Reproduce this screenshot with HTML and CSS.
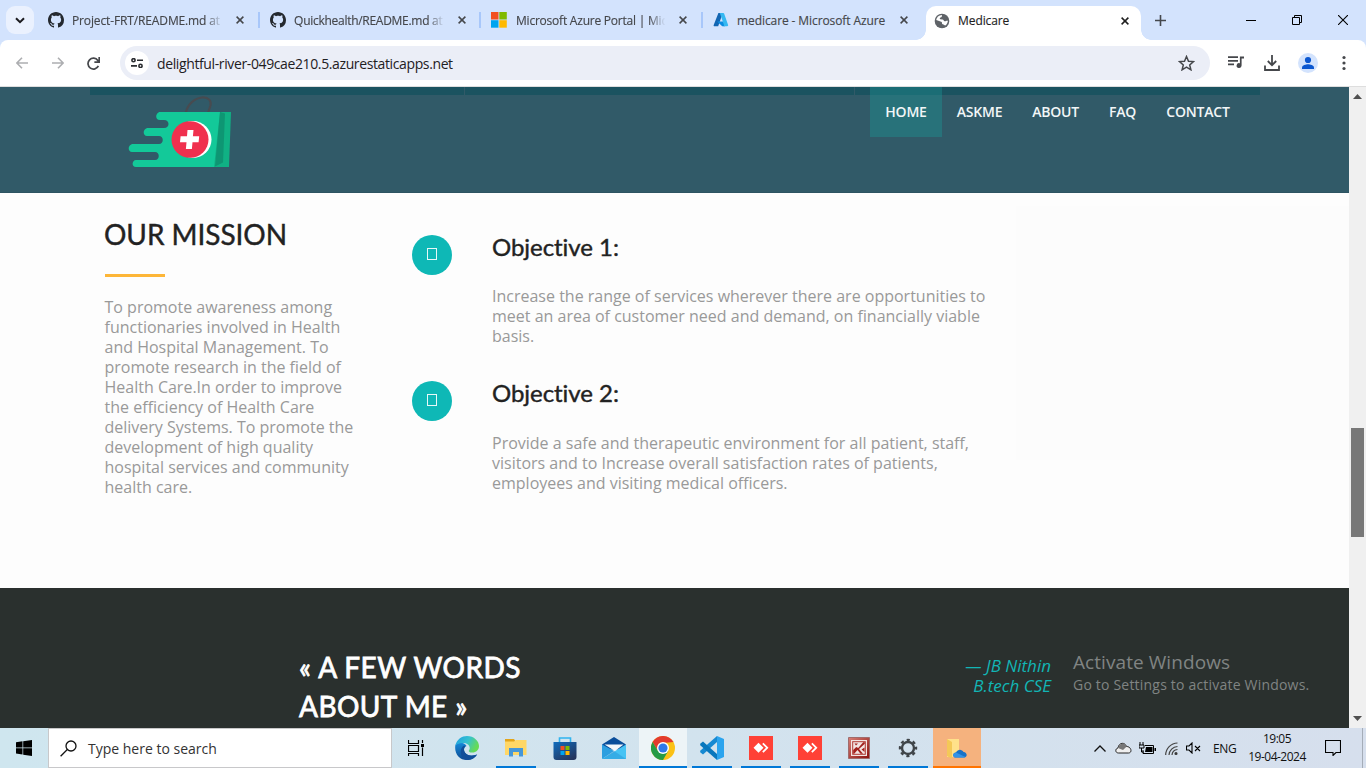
FILE: index.html
```html
<!DOCTYPE html>
<html lang="en">
<head>
<meta charset="utf-8">
<title>Medicare</title>
<link rel="stylesheet" href="styles.css">
</head>
<body>
<svg class="defs" width="0" height="0">
  <symbol id="github" viewBox="0 0 16 16"><path fill="#24292f" d="M8 0C3.58 0 0 3.58 0 8c0 3.54 2.29 6.53 5.47 7.59.4.07.55-.17.55-.38 0-.19-.01-.82-.01-1.49-2.01.37-2.53-.49-2.69-.94-.09-.23-.48-.94-.82-1.13-.28-.15-.68-.52-.01-.53.63-.01 1.08.58 1.23.82.72 1.21 1.87.87 2.33.66.07-.52.28-.87.51-1.07-1.78-.2-3.64-.89-3.64-3.95 0-.87.31-1.59.82-2.15-.08-.2-.36-1.02.08-2.12 0 0 .67-.21 2.2.82.64-.18 1.32-.27 2-.27s1.36.09 2 .27c1.53-1.04 2.2-.82 2.2-.82.44 1.1.16 1.92.08 2.12.51.56.82 1.27.82 2.15 0 3.07-1.87 3.75-3.65 3.95.29.25.54.73.54 1.48 0 1.07-.01 1.93-.01 2.2 0 .21.15.46.55.38A8.01 8.01 0 0 0 16 8c0-4.42-3.58-8-8-8z"/></symbol>
  <symbol id="close" viewBox="0 0 8 8"><path d="M.6.6l6.8 6.8M7.4.6L.6 7.4" fill="none" stroke="currentColor" stroke-width="1.5"/></symbol>
  <symbol id="anydesk" viewBox="0 0 24 24"><path fill="#ff4136" d="M0 0h24v24H0z"/><path fill="#fff" d="M9.5 6.8l5 5-5 5-5-5zM13.2 8l1.3-1.2 5 5-5 5-1.3-1.2 3.8-3.8z"/></symbol>
</svg>
<div class="window">
  <header class="tabs">
    <button class="tab-search"><svg width="10" height="7" viewBox="0 0 10 7"><path d="M1 1.2l4 4 4-4" fill="none" stroke="#1b1b1f" stroke-width="2"/></svg></button>
    <div class="tab"><svg class="fav"><use href="#github"/></svg><span class="label fade">Project-FRT/README.md at</span><svg class="x"><use href="#close"/></svg></div>
    <div class="tab"><svg class="fav"><use href="#github"/></svg><span class="label fade quick">Quickhealth/README.md at</span><svg class="x"><use href="#close"/></svg></div>
    <div class="tab"><svg class="fav" viewBox="0 0 16 16"><path fill="#f25022" d="M0 0h7.5v7.5H0z"/><path fill="#7fba00" d="M8.3 0h7.5v7.5H8.3z"/><path fill="#00a4ef" d="M0 8.2h7.5v7.5H0z"/><path fill="#ffb900" d="M8.3 8.2h7.5v7.5H8.3z"/></svg><span class="label fade ms">Microsoft Azure Portal | Mic</span><svg class="x"><use href="#close"/></svg></div>
    <div class="tab last"><svg class="fav" viewBox="0 0 16 16"><path fill="#1265b2" d="M5.4 1h4.3L5.2 14.3H1.5c-.7 0-1.1-.6-.8-1.3z"/><path fill="#0a8be0" d="M4.1 9.5h6.5l1.5 4.8H9.2z"/><path fill="#35b8f1" d="M6.5 1h3.8c.4 0 .7.2.8.6l4 11.5c.2.7-.2 1.2-.9 1.2h-4c.6-.1 1-.6.8-1.2L7 1.6z"/></svg><span class="label az">medicare - Microsoft Azure</span><svg class="x"><use href="#close"/></svg></div>
    <div class="tab active"><svg class="globe" viewBox="0 0 16 16"><circle cx="8" cy="8" r="7.3" fill="#5f6368"/><path fill="#fff" d="M8.1 2.1c-.5 1 .2 1.6-.9 2.2-1 .5-1.6.6-1.4 1.5.3.9 2 .4 3 .8 1.2.5.7 1.6 1.9 1.7 1.1.1 1.5-.7 3.2-.5-.1 1.9-1 3.5-2.3 4.5-1 .6-1.2-.6-2.2-.8-1-.1-1.5-.5-1.4-1.5.1-.8-.5-1.3-1.5-1.5L2.2 7.1c.4-2.6 2.4-4.8 5.900-5z"/><path fill="#5f6368" d="M8.200 2c2.400.3 4.600 1.800 5.100 4.300-.8.7-2 .9-2.600 0-.4-.8-.6-1.300-1.500-1.500-1-.2-1.100-1.400-1-2.800z"/></svg><span class="label">Medicare</span><svg class="x"><use href="#close"/></svg></div>
    <svg class="plus" width="11" height="11"><path d="M5.5 0v11M0 5.5h11" stroke="#45484d" stroke-width="1.6"/></svg>
    <div class="controls">
      <svg width="10" height="10"><path d="M0 5.5h10" stroke="#000"/></svg>
      <svg width="10" height="10" fill="none" stroke="#000"><path d="M.5 2.5h7v7h-7zM2.5 2.5v-2h7v7h-2"/></svg>
      <svg width="10" height="10"><path d="M0 0l10 10M10 0L0 10" stroke="#000" stroke-width="1.1"/></svg>
    </div>
  </header>
  <div class="toolbar">
    <svg class="nav-btn dim" viewBox="0 0 12 12"><path d="M12 6H1.2M6 .8L.9 6 6 11.2"/></svg>
    <svg class="nav-btn dim" viewBox="0 0 12 12"><path d="M0 6h10.8M6 .8L11.1 6 6 11.2"/></svg>
    <svg class="nav-btn" viewBox="0 0 12 12"><path d="M10.5 8.2A5 5 0 1 1 10 3.2L11.2 4.6M11.3 0v4.7H6.8"/></svg>
    <div class="address">
      <span class="site"><svg width="12" height="10" fill="none" stroke="#2b2d31" stroke-width="1.6"><circle cx="2.5" cy="2.2" r="1.6"/><path d="M6 2.2h6M0 7.9h6"/><circle cx="9.5" cy="7.9" r="1.6"/></svg></span>
      <span class="url">delightful-river-049cae210.5.azurestaticapps.net</span>
      <svg class="star" width="17" height="16" viewBox="0 0 17 16"><path d="M8.5 1.5l2 4.7 5 .4-3.8 3.3 1.2 4.9-4.4-2.6-4.4 2.6 1.2-4.9-3.8-3.3 5-.4z" fill="none" stroke="#45474b" stroke-width="1.5"/></svg>
    </div>
    <svg class="tb media" viewBox="0 0 16 14"><path d="M0 1.2h10M0 4.8h10M0 8.4h6" stroke="#45474b" stroke-width="1.8"/><path d="M16 .4v2h-2.4v7.2a2.5 2.5 0 1 1-1.7-2.4V.4z" fill="#45474b"/></svg>
    <svg class="tb dl" viewBox="0 0 16 16"><path d="M8 0v10M3.8 6L8 10.200 12.200 6M1 10.500V15h14v-4.500" fill="none" stroke="#45474b" stroke-width="1.8"/></svg>
    <svg class="tb user" viewBox="0 0 20 20"><circle cx="10" cy="10" r="10" fill="#d3e3fd"/><circle cx="10" cy="7" r="3.100" fill="#0b57d0"/><path d="M4 16v-1.500c0-2.200 4-3.200 6-3.200s6 1 6 3.200V16z" fill="#0b57d0"/></svg>
    <svg class="tb menu" viewBox="0 0 4 16" fill="#45474b"><circle cx="2" cy="2.500" r="1.600"/><circle cx="2" cy="8" r="1.600"/><circle cx="2" cy="13.500" r="1.600"/></svg>
  </div>
  <div class="viewport">
    <main class="page">
      <div class="masthead">
        <div class="strip"><i></i><i></i><i></i></div>
        <svg class="logo" width="104" height="73" viewBox="0 0 104 73">
          <path d="M58 16C60 8 67 2 74 1.500c7-.5 9.500 3.500 8.500 8L80 17" fill="none" stroke="#484b50" stroke-width="2.200"/>
          <path fill="#13c999" d="M32 16h61l-6 55H8c-5 0-4-7 0-7h19c5 0 5-8 0-8H4c-5 0-4-8 1-8h26c5 0 5-8 0-8H19c-5 0-4-8 1-8h16c6 0 6-8 0-8h-4c-6 0-4-8 0-8z"/>
          <path fill="#10b184" d="M92 16h11l-2 55H86z"/><path fill="#0e9673" d="M92 16l5 1.500-2 49L87 70.500z"/>
          <circle cx="65" cy="43.500" r="18.500" fill="#fff"/><ellipse cx="62" cy="43.500" rx="18.500" ry="18.300" fill="#f0304e"/>
          <path fill="#fff" d="M59.500 34h6l-.6 6.200h6.300l-.6 6H64.500l-.6 6.800h-6l.6-6.800h-6.500l.6-6h6.400z"/>
        </svg>
        <nav class="nav"><a class="on">HOME</a><a class="n2">ASKME</a><a class="n3">ABOUT</a><a class="n4">FAQ</a><a class="n5">CONTACT</a></nav>
      </div>
      <section class="mission">
        <div class="intro">
          <h2>OUR MISSION</h2>
          <hr>
          <p>To promote awareness among<br>functionaries involved in Health<br>and Hospital Management. To<br>promote research in the field of<br>Health Care.In order to improve<br>the efficiency of Health Care<br>delivery Systems. To promote the<br>development of high quality<br>hospital services and community<br>health care.</p>
        </div>
        <div class="objectives">
          <article><span class="dot"><i></i></span><div><h3>Objective 1:</h3><p>Increase the range of services wherever there are opportunities to<br>meet an area of customer need and demand, on financially viable<br>basis.</p></div></article>
          <article><span class="dot"><i></i></span><div><h3>Objective 2:</h3><p>Provide a safe and therapeutic environment for all patient, staff,<br>visitors and to Increase overall satisfaction rates of patients,<br>employees and visiting medical officers.</p></div></article>
        </div>
        <div class="shade"></div>
      </section>
      <section class="about">
        <h2>« A FEW WORDS<br>ABOUT ME »</h2>
        <cite>— JB Nithin<br>B.tech CSE</cite>
      </section>
    </main>
    <div class="scrollbar">
      <svg width="9" height="5"><path d="M0 5L4.500 0 9 5z" fill="#505050"/></svg>
      <div class="thumb"></div>
      <svg class="down" width="9" height="5"><path d="M0 0l4.500 5L9 0z" fill="#505050"/></svg>
    </div>
  </div>
  <footer class="taskbar">
    <div class="start"><svg width="16" height="16" viewBox="0 0 16 16"><path d="M0 2.200l6.500-.9v6.200H0zM7.200 1.200L16 0v7.500H7.200zM0 8.300h6.500v6.200L0 13.600zM7.200 8.300H16V16l-8.800-1.300z"/></svg></div>
    <div class="search"><svg width="17" height="17" fill="none" stroke="#111" stroke-width="1.300"><circle cx="11" cy="6" r="5"/><path d="M7.300 9.500L.6 16.200"/></svg><span>Type here to search</span></div>
    <div class="app view"><svg width="16" height="16" fill="none" stroke="#000"><path d="M.5 0v3.500h10V0M.5 16v-2.500h10V16M1 5.500h9.500v6H.5v-6zM14.500 0v3M14.500 7.500V16" stroke-width="1.200"/><path d="M13 4h3v3h-3z" fill="#000" stroke="none"/></svg></div>
    <div class="app"><svg width="24" height="24" viewBox="0 0 24 24"><defs><linearGradient id="eg" x1="0" y1="0" x2="1" y2=".4"><stop stop-color="#1b9de2"/><stop offset=".55" stop-color="#35c1d0"/><stop offset="1" stop-color="#66db55"/></linearGradient><linearGradient id="eb" x1="0" y1="0" x2="0" y2="1"><stop stop-color="#1689d8"/><stop offset="1" stop-color="#0d4a92"/></linearGradient></defs><path fill="url(#eb)" d="M.4 9C-1 17 4 24 12 24c4.500 0 8-2 10-5.400-6 2.400-12.500.2-13-4.600 0-2 1-3.400 2.600-4C9 6 3.500 6 .4 9z"/><path fill="url(#eg)" d="M.3 9.500C2 3 7 0 12 0c7 0 12 5 12 10 0 4-3 6.500-6.500 6.500-3 0-4.500-1.200-3.300-2.600 1.700-2-.3-6.300-5.300-6.800C5 6.700 2 8 .3 9.500z"/><path fill="#114f99" d="M9 9.500c-5.200 3-4 12 2 14.400 5 .7 9-1.700 11.200-5.300-7 2.800-13 0-13.200-5 0-1.700.8-2.800 1.700-3.500z"/></svg></div>
    <div class="app run"><svg width="22" height="20" viewBox="0 0 22 20"><path fill="#e3a51a" d="M0 1h9l2 3H0z"/><path fill="#ffd766" d="M0 3.500h9L11 2h10.500v15H0z"/><path fill="#4697d8" d="M4 10h14v8.500h-4V14H8v4.500H4z"/></svg></div>
    <div class="app"><svg width="24" height="24" viewBox="0 0 24 24"><defs><linearGradient id="sg" x1="0" y1="0" x2=".7" y2="1"><stop stop-color="#0f6cbd"/><stop offset="1" stop-color="#25365e"/></linearGradient></defs><path fill="none" stroke="#31b4ef" stroke-width="1.600" d="M6.500 7V2h11v5"/><path fill="url(#sg)" d="M.5 6h23v15a3 3 0 0 1-3 3h-17a3 3 0 0 1-3-3z"/><path fill="#f25022" d="M7.500 10h4v4h-4z"/><path fill="#7fba00" d="M12.500 10h4v4h-4z"/><path fill="#00a4ef" d="M7.500 15h4v4h-4z"/><path fill="#ffb900" d="M12.500 15h4v4h-4z"/></svg></div>
    <div class="app"><svg width="24" height="24" viewBox="0 0 24 24"><path fill="#0a4e9b" d="M0 8.500L12 1l12 7.500-3 5H3z"/><path fill="#f4f8fb" d="M2.500 8.500h19L13 15z"/><path fill="#2c9fe0" d="M0 8.500l12 6.500L0 23z"/><path fill="#46c3f4" d="M24 8.500V23H0z"/><path fill="#2495d8" d="M12 15l12 8H0z" opacity=".5"/></svg></div>
    <div class="app run current"><svg width="24" height="24" viewBox="0 0 24 24"><circle cx="12" cy="12" r="12" fill="#fbc116"/><path fill="#e33b2e" d="M1.600 6A12 12 0 0 1 22.400 6L12 7 7 15z"/><path fill="#269b46" d="M1.600 6a12 12 0 0 0 10.400 18l5.200-9L7 15z"/><circle cx="12" cy="12" r="6" fill="#fff"/><circle cx="12" cy="12" r="4.600" fill="#2f78e8"/></svg></div>
    <div class="app run"><svg width="24" height="24" viewBox="0 0 24 24"><path fill="#1689d2" d="M17 0v6L3 18.500l-2.800-2.300v-1.500z"/><path fill="#0877bd" d="M17 24v-6L3 5.500.2 7.800v1.500z"/><path fill="#2ba4ee" d="M17 0l7 3v18l-7 3z"/></svg></div>
    <div class="app run"><svg width="24" height="24"><use href="#anydesk"/></svg></div>
    <div class="app run"><svg width="24" height="24"><use href="#anydesk"/></svg></div>
    <div class="app run"><svg width="22" height="22" viewBox="0 0 22 22"><defs><linearGradient id="rg" x1="0" y1="0" x2="1" y2="1"><stop stop-color="#d88077"/><stop offset="1" stop-color="#8a100d"/></linearGradient></defs><path fill="url(#rg)" stroke="#a06c6c" d="M.5.5h21v21H.5z"/><path fill="#f3e4e2" d="M3 3h16v16H3z"/><path fill="#b03a34" d="M4.200 4.200h13.600v13.600H4.200z"/><path fill="#f3e4e2" d="M5.200 5.200h11.600v11.600H5.200z"/><path fill="#a3211d" d="M5.200 16.800V13l3-3 2 1 5-5.800h1.600v1.600L11 12l4 4.800h-2.500L9.500 13l-3.300 3.800zM6.500 6.500H10L8 8.500zM13.500 12.500l3-2V15z"/></svg></div>
    <div class="app run"><svg width="20" height="20" viewBox="0 0 20 20" fill="none" stroke="#3f4448"><circle cx="10" cy="10" r="6" stroke-width="2.400"/><circle cx="10" cy="10" r="8" stroke-width="2.400" stroke-dasharray="3.140 3.140" stroke-dashoffset="1.570"/></svg></div>
    <div class="app run orange"><svg width="20" height="21" viewBox="0 0 20 21"><path fill="#ffe18a" d="M0 1h12v18H0z"/><path fill="#f4c857" d="M0 1l5 3v17l-5-3z"/><path fill="#1672c8" d="M8 19.500c-3-1-2-5 1-5 2-4 6-3.500 7.500-.5 3.500 0 4.500 5 1 5.500z"/><path fill="#3293e6" d="M8 19.500c-3-1-2-5 1-5l9.500 4.500-1 .5z"/></svg></div>
    <div class="tray">
      <svg width="12" height="7" fill="none" stroke="#111" stroke-width="1.300"><path d="M.5 6.500L6 1l5.500 5.500"/></svg>
      <svg class="cloud" width="17" height="12" viewBox="0 0 17 12"><path d="M3.500 11C0 11 0 6.500 3 6 4 0 10 0 11.500 4.500c5 0 6 6.500 2 6.500z" fill="#efefef" stroke="#222"/><path d="M3 6C4.500.5 10 0 11.500 4.800L8 8z" fill="#777"/></svg>
      <svg class="bat" width="17" height="13" viewBox="0 0 17 13"><path d="M6 3.500h8.500v8H4V8" fill="none" stroke="#000"/><path d="M7 5h6.500v5H6zM15.500 6H17v3h-1.500z"/><path d="M1 0v3M4 0v3M0 3h5v3H0zM2.500 6v4H5" fill="none" stroke="#000"/></svg>
      <svg class="wifi" width="13" height="13" viewBox="0 0 13 13" fill="none" stroke="#444" stroke-width="1.200"><path d="M.7 13A12 12 0 0 1 12.500 1M4 13a9 9 0 0 1 8.500-8.500M7 13a6 6 0 0 1 5.500-5.500"/><circle cx="11" cy="11.500" r="1" fill="#000"/></svg>
      <svg class="spk" width="15" height="12" viewBox="0 0 15 12" fill="none" stroke="#000" stroke-width="1.100"><path d="M.5 4H3l3-3v10L3 8H.5zM9 4l5 5M14 4L9 9"/></svg>
      <span class="lang">ENG</span>
      <span class="clock"><b>19:05</b><b class="date">19-04-2024</b></span>
      <svg class="note" width="16" height="16" fill="none" stroke="#000" stroke-width="1.100"><path d="M.5.5h15v12H11L8 15.500V12.500H.5z"/></svg>
      <i class="peek"></i>
    </div>
  </footer>
</div>
<div class="watermark"><div class="w1">Activate Windows</div><div class="w2">Go to Settings to activate Windows.</div></div>
</body>
</html>
```
FILE: styles.css
```css
* { box-sizing: border-box; }
body { margin: 0; overflow: hidden; font-family: "Open Sans", "Noto Sans", sans-serif; }
svg { display: block; flex: none; }
.defs { position: absolute; }
.window { width: 1366px; height: 768px; display: grid; grid-template-rows: 40px 47px 641px 40px; background: #d3e3fd; }

.tabs { background: #d3e3fd; display: flex; align-items: center; padding-left: 6px; }
.tab-search { width: 28px; height: 28px; border: 0; border-radius: 9px; background: #eaf1fe; display: grid; place-items: center; padding: 0; margin-right: 4px; }
.tab { width: 221.5px; height: 40px; padding-left: 10px; display: flex; align-items: center; color: #45474b; font-size: 12px; position: relative; }
.tab::after { content: ""; position: absolute; right: 0; top: 12px; width: 2px; height: 16px; background: #a8c7fa; }
.tab.last::after, .tab.active::after { display: none; }
.fav { width: 16px; height: 16px; margin-right: 8px; }
.label { width: 156px; white-space: nowrap; letter-spacing: -.1px; -webkit-text-stroke: .15px; }
.fade { width: 152px; margin-right: 4px; letter-spacing: -.13px; -webkit-mask-image: linear-gradient(90deg, #000 88%, transparent 99%); mask-image: linear-gradient(90deg, #000 88%, transparent 99%); }
.quick { letter-spacing: -.28px; padding-left: .6px; }
.ms { letter-spacing: -.22px; padding-left: 1px; }
.az { padding-left: .6px; }
.x { width: 8px; height: 8px; margin-left: 8px; }
.tab.last { width: 223px; }
.tab.last .x { margin-left: 7px; }
.tab.active { width: 215px; height: 34px; align-self: flex-end; padding: 0 0 5px 8px; background: #fff; border-radius: 10px 10px 0 0; color: #1f1f1f; }
.tab.active::before { content: ""; position: absolute; z-index: 1; left: -10px; right: -10px; bottom: 0; height: 10px; background: radial-gradient(circle at 0 0, transparent 9.5px, #fff 10px) left / 10px 10px no-repeat, radial-gradient(circle at 100% 0, transparent 9.5px, #fff 10px) right / 10px 10px no-repeat; }
.tab.active .label { width: 155px; padding-left: .6px; }
.globe { width: 16px; height: 16px; margin-right: 8px; }
.plus { margin-left: 14px; }
.controls { display: flex; gap: 36px; margin-left: auto; padding-right: 18px; }

.toolbar { background: #fff; border-bottom: 1px solid #dedede; display: flex; align-items: center; padding-left: 16px; border-radius: 8px 8px 0 0; }
.nav-btn { width: 12px; height: 12px; margin-right: 24px; fill: none; stroke: #45474b; stroke-width: 1.6; }
.nav-btn.dim { stroke: #adaeb1; }
.address { width: 1090px; height: 34px; margin-left: -4px; background: #ebeef7; border-radius: 17px; display: flex; align-items: center; padding-left: 5px; }
.nav-btn:nth-child(3) { width: 13px; height: 13px; margin-left: -1px; }
.site { width: 24px; height: 24px; border-radius: 50%; background: #fff; display: grid; place-items: center; }
.url { margin-left: 8px; font-size: 14px; letter-spacing: -.38px; color: #1f2023; }
.star { margin-left: auto; margin-right: 15.5px; }
.media { width: 16px; height: 14px; margin-left: 18px; }
.dl { width: 16px; height: 16px; margin-left: 20px; }
.user { width: 20px; height: 20px; margin-left: 18px; }
.menu { width: 4px; height: 16px; margin-left: 24px; }

.viewport { display: grid; grid-template-columns: 1349px 17px; overflow: hidden; }
.page { background: #fdfdfd; display: grid; grid-template-rows: 106px 395px 140px; }
.masthead { background: #315a68; display: flex; justify-content: space-between; padding: 0 104px 0 128px; position: relative; border-bottom: 1px solid #2d5462; }
.strip { position: absolute; left: 90px; top: 0; width: 1170px; height: 8px; display: grid; grid-template-columns: 374px 389px 1fr; gap: 1px; }
.strip i { background: #1b5360; }
.logo { margin-top: 9px; position: relative; }
.nav { display: flex; position: relative; }
.nav a { height: 50px; line-height: 50px; width: 75px; text-align: center; color: #f2f6f7; font-size: 14px; font-weight: 600; letter-spacing: -.22px; }
.nav .on { width: 72px; background: rgba(27, 150, 150, .4); }
.nav .n3 { width: 77px; }
.nav .n4 { width: 57px; }
.nav .n5 { width: 94px; }

.mission { display: grid; grid-template-columns: 308px 604px 333px; padding-left: 104px; }
h2, h3, p { margin: 0; }
h2, h3 { font-family: Lato, sans-serif; font-weight: 400; color: #222; -webkit-text-stroke: .4px; white-space: nowrap; font-variant-ligatures: none; }
.intro h2 { margin-top: 21px; font-size: 28px; line-height: 40px; letter-spacing: -.05px; }
.intro hr { width: 60px; height: 3px; border: 0; background: #fdb638; margin: 20px 0 20px 1px; }
.mission p { font-size: 16px; line-height: 20px; color: #999; white-space: nowrap; }
.intro p { padding-left: .5px; }
.objectives { padding-top: 42px; }
article { display: flex; height: 146.3px; }
.dot { width: 40px; height: 40px; border-radius: 50%; background: #0eb8b6; margin-right: 40px; display: grid; place-items: center; }
.dot i { width: 10px; height: 12px; border: 1px solid #e8f8f8; margin-top: -2px; }
h3 { font-size: 24px; line-height: 26px; margin-top: -1px; margin-bottom: 26px; letter-spacing: -.05px; }
article + article h3 { margin-bottom: 26.7px; }
.shade { height: 254px; margin-top: 13px; background: #fcfcfc; }

.about { background: #2a302e; display: flex; justify-content: space-between; padding: 60px 298px 0 299px; overflow: hidden; }
.about h2 { color: #fff; font-size: 28px; line-height: 39px; -webkit-text-stroke: .8px; letter-spacing: .45px; }
.about cite { color: #12b5b5; font-size: 17px; line-height: 20px; text-align: right; margin-top: 8px; letter-spacing: 0; }

.scrollbar { background: #f0f0f0; display: flex; flex-direction: column; align-items: center; padding-top: 7px; }
.thumb { width: 13px; height: 109px; margin-top: 329px; background: #787878; }
.down { margin-top: 179px; }

.taskbar { background: linear-gradient(90deg, #cfe6ef, #d2e3ee 50%, #d6dfed); display: flex; }
.start { width: 48px; display: grid; place-items: center; }
.search { width: 344px; background: #fff; border: 1px solid #c8c8ca; display: flex; align-items: center; padding-left: 11px; font-size: 14px; color: #333; }
.search span { margin-left: 11px; letter-spacing: 0; }
.app { width: 48px; margin-right: 1px; display: grid; place-items: center; background: linear-gradient(#0078d7, #0078d7) bottom / 0 2px no-repeat; }
.view { margin-right: 3px; }
.run { background-size: 40px 2px; }
.current { background-size: 48px 2px; background-color: #edf4f7; }
.orange { background: linear-gradient(#ff7400, #ff7400) bottom / 48px 2px no-repeat #f5b27e; }
.tray { margin-left: auto; display: flex; align-items: center; color: #111; font-size: 12px; }
.cloud { margin-left: 9px; }
.bat { margin-left: 7px; }
.wifi { margin-left: 9px; }
.spk { margin-left: 8px; }
.lang { width: 24px; margin-left: 12px; letter-spacing: -.4px; }
.clock { width: 60px; margin-left: 10px; display: grid; justify-items: center; line-height: 18px; margin-top: -1px; }
.clock b { font-weight: 400; letter-spacing: -.5px; }
.note { margin-left: 18px; }
.peek { width: 1px; height: 40px; background: #a5adb8; margin: 0 3px 0 21px; }

.watermark { position: absolute; left: 1073px; top: 649px; color: #808483; white-space: nowrap; }
.w1 { font-size: 19px; line-height: 26px; letter-spacing: .07px; }
.w2 { font-size: 14px; line-height: 20px; letter-spacing: .2px; }
```
